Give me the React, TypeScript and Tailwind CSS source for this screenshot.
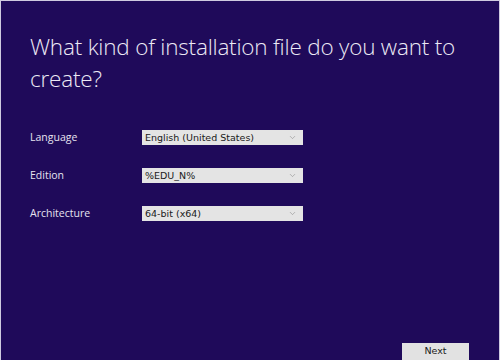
import { ChevronDown } from "lucide-react";

const fields = [
  { label: "Language", value: "English (United States)" },
  { label: "Edition", value: "%EDU_N%" },
  { label: "Architecture", value: "64-bit (x64)" },
];

function Select({ value }: { value: string }) {
  return (
    <div className="flex h-[15px] w-[161px] items-center justify-between bg-[#e4e4e4] pl-[3px] pr-[6px] text-[9.5px] text-[#1a1a1a] [font-family:Tahoma,'DejaVu_Sans','Liberation_Sans',sans-serif]">
      <span className="leading-none">{value}</span>
      <ChevronDown className="h-[9px] w-[9px] text-[#8a8a8a]" strokeWidth={1.5} />
    </div>
  );
}

export default function App() {
  return (
    <div className="h-[360px] w-[500px] overflow-hidden border-x border-t border-[#cfcbe0] bg-[#1f0a5a] [font-family:'Open_Sans','Noto_Sans',sans-serif]">
      <div className="flex h-full flex-col">
        <h1 className="pl-[29px] pt-[30px] pr-[20px] text-[22.5px] font-light leading-[32px] tracking-[-0.2px] text-[#ece9f5]">
          What kind of installation file do you want to create?
        </h1>

        <div className="mt-[35px] flex flex-col gap-[22px] pl-[29px]">
          {fields.map((f) => (
            <div key={f.label} className="flex items-center">
              <span className="w-[112px] text-[10.5px] text-[#e6e3f0]">{f.label}</span>
              <Select value={f.value} />
            </div>
          ))}
        </div>

        <div className="mt-auto flex justify-end pr-[30px]">
          <button className="h-[17px] w-[67px] bg-[#e2e2e2] text-[9.5px] text-[#1a1a1a] [font-family:Tahoma,'DejaVu_Sans','Liberation_Sans',sans-serif]">
            Next
          </button>
        </div>
      </div>
    </div>
  );
}
